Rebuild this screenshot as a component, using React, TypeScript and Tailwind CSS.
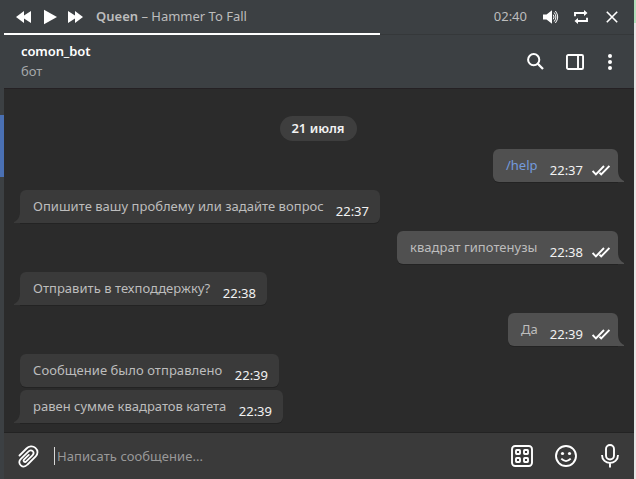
import React from "react";

type Message = {
  text: string;
  time: string;
  out?: boolean;
  command?: boolean;
  tail?: boolean;
  box: string;
};

const messages: Message[] = [
  { text: "/help", time: "22:37", out: true, command: true, tail: true, box: "w-[125px] mt-2" },
  { text: "Опишите вашу проблему или задайте вопрос", time: "22:37", tail: true, box: "w-[360px] mt-2 tracking-[0.03px]" },
  { text: "квадрат гипотенузы", time: "22:38", out: true, tail: true, box: "w-[221px] mt-2 tracking-[0.03px]" },
  { text: "Отправить в техподдержку?", time: "22:38", tail: true, box: "w-[247px] mt-2 tracking-[0.03px]" },
  { text: "Да", time: "22:39", out: true, tail: true, box: "w-[110px] mt-2" },
  { text: "Сообщение было отправлено", time: "22:39", box: "w-[259px] mt-2 tracking-[0.06px]" },
  { text: "равен сумме квадратов катета", time: "22:39", tail: true, box: "w-[263px] mt-[3px]" },
];

function Checks() {
  return (
    <svg width="18" height="11" viewBox="0 0 18 11" className="ml-[9px] mb-[6px] shrink-0" fill="none" stroke="#fff" strokeWidth="1.9">
      <path d="M0.6 6 L3.9 9.4 L12 1" />
      <path d="M7.4 7.6 L9.2 9.4 L17.4 1" />
    </svg>
  );
}

function Bubble({ m }: { m: Message }) {
  const round = m.tail ? (m.out ? "rounded-[6px] rounded-br-none" : "rounded-[6px] rounded-bl-none") : "rounded-[6px]";
  return (
    <div
      className={`relative flex h-[33px] items-end pl-[13px] shadow-[0_1px_0_#232323] ${
        m.out ? "self-end bg-[#505050] pr-[8px]" : "self-start bg-[#3a3a3a] pr-[11px]"
      } ${round} ${m.box}`}
    >
      <span className={`mb-2 leading-[18px] ${m.command ? "text-[#749bdc]" : "text-[#bdbdbd]"}`}>{m.text}</span>
      <span className="mb-[3px] ml-auto leading-[18px] tracking-normal text-[#f2f2f2]">{m.time}</span>
      {m.out && <Checks />}
      {m.tail && (
        <svg
          width="6"
          height="12"
          viewBox="0 0 6 12"
          className={m.out ? "absolute bottom-0 left-full fill-[#505050]" : "absolute right-full bottom-0 -scale-x-100 fill-[#3a3a3a]"}
        >
          <path d="M0 0 C0 6 2 9 6 11 V12 H0Z" />
        </svg>
      )}
    </div>
  );
}

function Player() {
  return (
    <div className="flex h-[33px] items-center pl-3 text-[#bdbdbd]">
      <svg width="68" height="16" viewBox="0 0 68 16" fill="#fff">
        <path d="M0 8 L8 2 V6.5 L15 2 V14 L8 9.5 V14Z" />
        <path d="M28 0.8 L41 8 L28 15.2Z" />
        <path d="M67 8 L59 2 V6.5 L52 2 V14 L59 9.5 V14Z" />
      </svg>
      <div className="ml-3 whitespace-pre">
        <span className="font-semibold">Queen</span> – Hammer To Fall
      </div>
      <span className="ml-auto">02:40</span>
      <svg width="16" height="14" viewBox="0 0 16 14" className="ml-4" fill="none" stroke="#fff">
        <path d="M0 4.5 H3.5 L9 0.2 V13.8 L3.5 9.5 H0Z" fill="#fff" stroke="none" />
        <path d="M10.3 4.7 Q11.8 7 10.3 9.3 M11.2 2.5 Q14.6 7 11.2 11.5 M12.4 1 Q17 7 12.4 13" strokeWidth="1" />
      </svg>
      <svg width="14" height="14" viewBox="0 0 14 14" className="ml-[15px]" fill="none" stroke="#fff" strokeWidth="1.9">
        <path d="M1 6.3 V3 H11 M13 7.7 V11 H3" />
        <path d="M10 0 L13.5 3 L10 6Z M4 8 L0.5 11 L4 14Z" fill="#fff" stroke="none" />
      </svg>
      <svg width="12" height="12" viewBox="0 0 12 12" className="mr-4 ml-[18px]" stroke="#fff" strokeWidth="1.6">
        <path d="M0.8 0.8 L11.2 11.2 M11.2 0.8 L0.8 11.2" />
      </svg>
    </div>
  );
}

function Header() {
  return (
    <div className="flex h-[53px] items-center pl-[17px]">
      <div className="-mt-px">
        <div className="text-[13px] leading-5 font-semibold tracking-[-0.1px] text-white">comon_bot</div>
        <div className="leading-5 text-[#a5a8aa]">бот</div>
      </div>
      <svg width="17" height="17" viewBox="0 0 17 17" className="ml-auto" fill="none" stroke="#fff" strokeWidth="2">
        <circle cx="6.7" cy="6.7" r="5.6" />
        <path d="M10.8 10.8 L16 16" strokeWidth="2.3" />
      </svg>
      <svg width="18" height="16" viewBox="0 0 18 16" className="ml-[22px]" fill="none" stroke="#fff" strokeWidth="1.9">
        <rect x="0.95" y="0.95" width="16.1" height="14.1" rx="1.3" />
        <path d="M12 1 V15" />
      </svg>
      <svg width="4" height="16" viewBox="0 0 4 16" className="mr-[22px] ml-6" fill="#fff">
        <circle cx="2" cy="2" r="2" />
        <circle cx="2" cy="8" r="2" />
        <circle cx="2" cy="14" r="2" />
      </svg>
    </div>
  );
}

function Composer() {
  return (
    <div className="flex h-[47px] items-center border-t border-[#232323] bg-[#3a3a3a] pl-[14px]">
      <svg width="21" height="23" viewBox="0 0 21 23" fill="none" stroke="#fff" strokeWidth="1.8" strokeLinecap="round">
        <path d="M1.5 10.5 L8.5 3.5 C10.8 1.1 14.7 .4 17.4 2.9 C20.4 5.5 19.9 9 17.7 11.4 L9.6 19.5 C7.4 21.8 4.7 22.1 2.8 20.3 C.7 18.4 .9 15.8 2.9 13.8 L10.3 6.6 C11.8 5.1 13.6 5.1 14.7 6.2 C15.9 7.4 15.7 9 14.4 10.3 L8.3 16.4 C7.5 17.2 6.6 17.1 6 16.5 C5.4 15.9 5.5 15.1 6.2 14.4 L10.8 9.9" />
      </svg>
      <div className="-mt-px ml-[15px] h-[18px] w-px bg-[#d8d8d8]" />
      <span className="mt-[2px] ml-[2px] tracking-[0.06px] text-[#999]">Написать сообщение...</span>
      <svg width="22" height="22" viewBox="0 0 22 22" className="ml-auto" fill="none" stroke="#fff" strokeWidth="1.9">
        <rect x="1" y="1" width="20" height="20" rx="3.2" />
        <rect x="5" y="5" width="4" height="4" rx=".7" />
        <rect x="13" y="5" width="4" height="4" rx=".7" />
        <rect x="5" y="13" width="4" height="4" rx=".7" />
        <rect x="13" y="13" width="4" height="4" rx=".7" />
      </svg>
      <svg width="22" height="22" viewBox="0 0 22 22" className="ml-[22px]" fill="none" stroke="#fff" strokeWidth="1.9">
        <circle cx="11" cy="11" r="10" />
        <path d="M6.3 13.7 Q11 18.5 15.7 13.7" />
        <circle cx="7.5" cy="8.5" r="1.6" fill="#fff" stroke="none" />
        <circle cx="14.5" cy="8.5" r="1.6" fill="#fff" stroke="none" />
      </svg>
      <svg width="18" height="24" viewBox="0 0 18 24" className="mr-[15px] ml-6" fill="none" stroke="#fff" strokeWidth="1.9">
        <rect x="5" y="1" width="8" height="14.5" rx="4" />
        <path d="M1 11 C1 21.5 17 21.5 17 11 M9 19 V23.5" />
      </svg>
    </div>
  );
}

export default function App() {
  return (
    <div className="flex h-[479px] w-[636px] overflow-hidden font-['Noto_Sans','Open_Sans',sans-serif] text-[13px]">
      <div className="w-1 bg-[#3c4043] pt-[115px]">
        <div className="h-[62px] bg-[#4a70b3]" />
      </div>
      <main className="flex w-[630px] flex-col bg-[#3c4043]">
        <Player />
        <div className="flex h-[2px] items-end">
          <div className="h-[2px] w-[376px] bg-white" />
          <div className="h-px flex-1 bg-[#35383a]" />
        </div>
        <Header />
        <section className="flex h-[344px] flex-col border-t border-[#252124] bg-[#2b2b2b] px-4">
          <div className="mt-[27px] mr-[2px] flex h-[25px] w-[77px] items-center justify-center self-center rounded-full bg-[#3e3e3e] font-semibold text-[#f2f2f2]">
            21 июля
          </div>
          {messages.map((m, i) => (
            <Bubble key={i} m={m} />
          ))}
        </section>
        <Composer />
      </main>
      <div className="w-[2px] bg-[#e6e6e6]">
        <div className="h-[23px] bg-[#b1dfbb]" />
      </div>
    </div>
  );
}
